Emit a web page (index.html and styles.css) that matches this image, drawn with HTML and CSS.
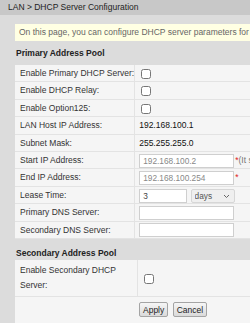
FILE: index.html
```html
<!DOCTYPE html>
<html lang="en">

<head>
  <meta charset="UTF-8" />
  <meta name="viewport" content="width=device-width, initial-scale=1.0" />
  <title>DHCP Server Configuration</title>
  <link rel="stylesheet" href="styles.css">
</head>

<body>
  <div class="titlebar">LAN &gt; DHCP Server Configuration</div>

  <div class="page">
    <div class="notice">On this page, you can configure DHCP server parameters for the LAN side.</div>

    <h3 class="section first">Primary Address Pool</h3>
    <table class="form">
      <tr>
        <td class="label">Enable Primary DHCP Server:</td>
        <td class="value"><input type="checkbox" class="check" /></td>
      </tr>
      <tr>
        <td class="label">Enable DHCP Relay:</td>
        <td class="value"><input type="checkbox" class="check" /></td>
      </tr>
      <tr>
        <td class="label">Enable Option125:</td>
        <td class="value"><input type="checkbox" class="check" /></td>
      </tr>
      <tr>
        <td class="label">LAN Host IP Address:</td>
        <td class="value"><span class="static">192.168.100.1</span></td>
      </tr>
      <tr>
        <td class="label">Subnet Mask:</td>
        <td class="value"><span class="static">255.255.255.0</span></td>
      </tr>
      <tr>
        <td class="label">Start IP Address:</td>
        <td class="value">
          <input type="text" class="field" value="192.168.100.2" /><span class="req">*</span><span class="hint">(It should be in the same subnet as the LAN host IP address)</span>
        </td>
      </tr>
      <tr>
        <td class="label">End IP Address:</td>
        <td class="value">
          <input type="text" class="field" value="192.168.100.254" /><span class="req">*</span>
        </td>
      </tr>
      <tr>
        <td class="label">Lease Time:</td>
        <td class="value">
          <input type="text" class="field short" value="3" />
          <span class="unit-wrap">
            <select class="unit">
              <option>days</option>
              <option>hours</option>
              <option>minutes</option>
            </select>
            <svg class="chevron" width="7" height="5" viewBox="0 0 7 5">
              <path d="M1 1 L3.5 3.5 L6 1" fill="none" stroke="#666" stroke-width="1" />
            </svg>
          </span>
        </td>
      </tr>
      <tr>
        <td class="label">Primary DNS Server:</td>
        <td class="value"><input type="text" class="field" /></td>
      </tr>
      <tr>
        <td class="label">Secondary DNS Server:</td>
        <td class="value"><input type="text" class="field" /></td>
      </tr>
    </table>

    <h3 class="section">Secondary Address Pool</h3>
    <table class="form">
      <tr class="tall">
        <td class="label">Enable Secondary DHCP Server:</td>
        <td class="value"><input type="checkbox" class="check" /></td>
      </tr>
      <tr>
        <td class="buttons" colspan="2">
          <button>Apply</button>
          <button>Cancel</button>
        </td>
      </tr>
    </table>
  </div>
</body>

</html>
```

FILE: styles.css
```css
body {
  margin: 0;
  width: 250px;
  height: 323px;
  overflow: hidden;
  background-color: #dcdcdc;
  font-family: "Liberation Sans", Arial, sans-serif;
  font-size: 8.5px;
  color: #333;
}

.titlebar {
  height: 15px;
  line-height: 15px;
  padding-left: 8px;
  background-color: #c8c8c8;
  color: #222;
  white-space: nowrap;
}

.page {
  width: 340px;
  padding: 9px 0 0 15px;
}

.notice {
  height: 17px;
  line-height: 17px;
  padding-left: 4px;
  background-color: #ffffe3;
  color: #666;
  white-space: nowrap;
}

.section {
  margin: 0;
  padding: 8px 0 0 1px;
  line-height: 13px;
  font-size: 8.5px;
  font-weight: bold;
  color: #222;
}

.section.first {
  padding: 5px 0 5px 1px;
  line-height: 14px;
}

.form {
  width: 100%;
  border-collapse: collapse;
  background-color: #f5f5f5;
}

.form td {
  border-bottom: 1px solid #e3e3e3;
  line-height: 15.4px;
  padding: 1px 0 0;
  white-space: nowrap;
}

.label {
  width: 117px;
  padding-left: 5px !important;
  border-right: 1px solid #e3e3e3;
  color: #333;
}

.value {
  padding-left: 4px !important;
}

.tall .label {
  white-space: normal;
  line-height: 15px !important;
  padding-top: 3px !important;
  padding-bottom: 3px !important;
}

.check {
  width: 10px;
  height: 10px;
  margin: 0 0 0 2px;
  vertical-align: middle;
}

.static {
  color: #111;
}

.field {
  box-sizing: border-box;
  width: 95px;
  height: 14px;
  margin: 0;
  padding: 0 3px;
  border: 1px solid #cfcfcf;
  background-color: #fff;
  font-family: "Liberation Sans", Arial, sans-serif;
  font-size: 8.3px;
  color: #888;
  vertical-align: middle;
}

.field.short {
  width: 48px;
  color: #444;
}

.unit-wrap {
  position: relative;
  display: inline-block;
  vertical-align: middle;
  line-height: 0;
}

.unit {
  appearance: none;
  -webkit-appearance: none;
  box-sizing: border-box;
  width: 44px;
  height: 14px;
  margin: 0 0 0 1px;
  padding: 0 3px;
  border: 1px solid #d6d6d6;
  border-radius: 2px;
  background-color: #efefef;
  font-family: "Liberation Sans", Arial, sans-serif;
  font-size: 8.3px;
  color: #555;
}

.chevron {
  position: absolute;
  right: 5px;
  top: 5px;
}

.req {
  margin-left: 1px;
  color: #e02020;
  vertical-align: top;
}

.hint {
  color: #777;
}

.form td.buttons {
  padding: 5px 0 5px 124px;
  border-bottom: none;
}

button {
  height: 15px;
  margin: 0 2px 0 0;
  padding: 0 3px;
  border: 1px solid #a4a4a4;
  border-radius: 2px;
  background: linear-gradient(#f6f6f6, #dadada);
  font-family: "Liberation Sans", Arial, sans-serif;
  font-size: 8.5px;
  color: #222;
}
```
